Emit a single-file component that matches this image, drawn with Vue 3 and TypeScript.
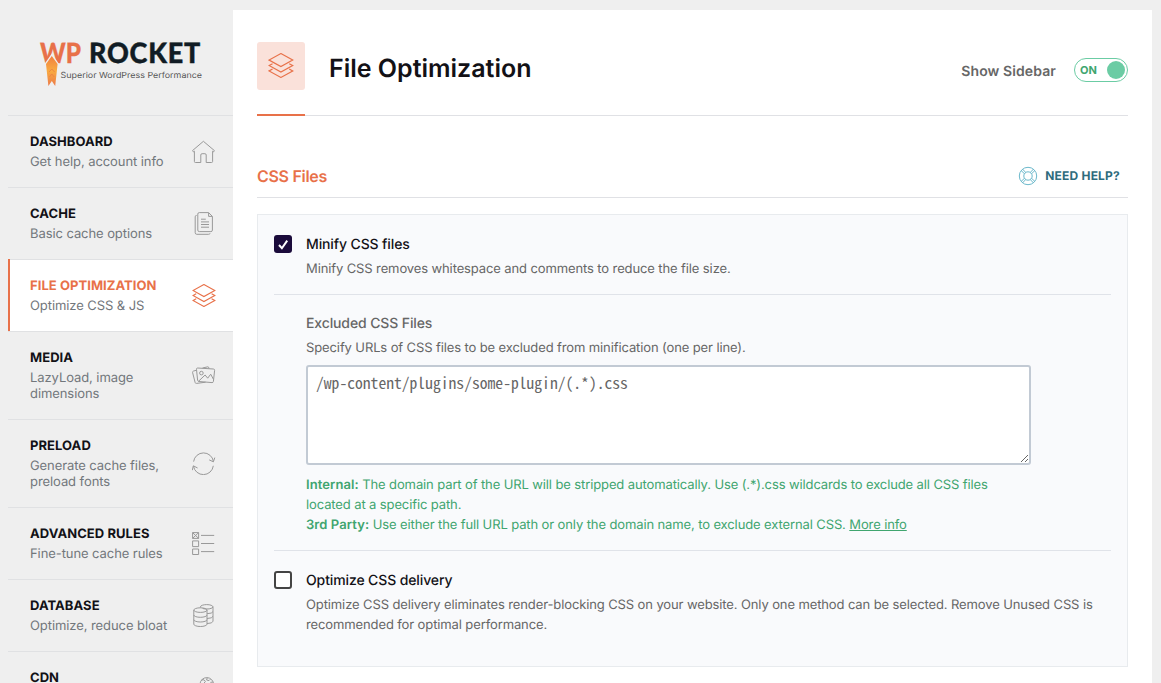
<script setup lang="ts">
import { ref } from 'vue'

interface NavItem {
  title: string
  text?: string
  icon: string
}

const layers = 'M11.9 .5L22.8 6.5L11.9 12.5L1 6.5ZM4.2 9.8L1 11.5L11.9 17.5L22.8 11.5L19.6 9.8M4.2 14.8L1 16.5L11.9 22.5L22.8 16.5L19.6 14.8'

const icons: Record<string, string> = {
  home: 'M.5 10.6L11.4 1.3L22.4 10.6L21.5 11.9L20.6 11.2V21.5Q20.6 22.5 19.6 22.5H14.2V15Q14.2 13.7 12.9 13.7H10.1Q8.8 13.7 8.8 15V22.5H3.4Q2.4 22.5 2.4 21.5V11.2L1.5 11.9Z',
  cache: 'M7.3 .6H16.6L20.4 4.4V18.1Q20.4 19.6 18.9 19.6H7.3Q5.8 19.6 5.8 18.1V2.1Q5.8 .6 7.3 .6ZM16.6 .8V4.4H20.2M4.6 3.4Q3.2 3.4 3.2 4.8V20.7Q3.2 22.3 4.8 22.3H16.6Q18 22.3 18 21.4M9 7.2H13.8M9 9.9H17M9 12.5H17M9 15.2H17',
  layers,
  media: 'M5.6 4L21.4 5Q22.7 5.1 22.6 6.4L21.4 17.5Q21.2 18.7 20 18.6L7 17.5Q5.8 17.4 5.6 16.2L4.5 5.4Q4.4 4 5.6 4ZM4.5 6.2L1.4 7.1Q.3 7.5 .6 8.6L3.1 18.4Q3.4 19.6 4.6 19.4L13.6 18.2M10.5 4L15.8 2.8Q16.8 2.6 17 4.6M11.2 9.1A1.8 1.8 0 1 1 7.6 9.1A1.8 1.8 0 1 1 11.2 9.1M6.6 17.2L13.1 11L15.7 14.2L18.7 10.2L21.4 15.2',
  preload: 'M1.6 9.6A10 10 0 0 1 21.4 9.4M17.2 7.9L21.4 9.8L22.8 5.6M21.3 13.8A10 10 0 0 1 1.5 14.2M5.6 16L1.3 13.8L.3 18.2',
  rules: 'M.6 .6H6.6V6.4H.6ZM.6 .6L6.6 6.4M6.6 .6L.6 6.4M.6 8.9H6.6V14.6H.6ZM.6 17H6.6V22.5H.6ZM9 3.4H22.2M9 11.5H22.2M9 19.6H22.2',
  database: 'M1.8 6.1A6.6 2.3 0 0 1 15 6.1A6.6 2.3 0 0 1 1.8 6.1V20.2A6.6 2.3 0 0 0 15 20.2V6.1M1.8 11A6.6 2.3 0 0 0 15 11M1.8 15.7A6.6 2.3 0 0 0 15 15.7M8.4 3.6V2.9A6.3 2.3 0 0 1 21 2.9A6.3 2.3 0 0 1 10.6 4.5M21 2.9V17.2Q21 19.3 15 19.6M21 7.6Q20.5 9.5 15 9.7M21 12.3Q20.5 14.3 15 14.5',
  cdn: 'M8 8.4A6.8 6.8 0 0 1 21.6 8.4A6.8 6.8 0 0 1 8 8.4M9.4 4L12 3.8L13.4 5.4L12 7.2L13 8.6M15.2 1.8L14.6 4L17 4.6L18.4 3.2M21 6L18.4 6.4',
}

const nav: NavItem[] = [
  { title: 'DASHBOARD', text: 'Get help, account info', icon: 'home' },
  { title: 'CACHE', text: 'Basic cache options', icon: 'cache' },
  { title: 'FILE OPTIMIZATION', text: 'Optimize CSS & JS', icon: 'layers' },
  { title: 'MEDIA', text: 'LazyLoad, image dimensions', icon: 'media' },
  { title: 'PRELOAD', text: 'Generate cache files, preload fonts', icon: 'preload' },
  { title: 'ADVANCED RULES', text: 'Fine-tune cache rules', icon: 'rules' },
  { title: 'DATABASE', text: 'Optimize, reduce bloat', icon: 'database' },
  { title: 'CDN', icon: 'cdn' },
]

const active = ref('layers')
const sidebarShown = ref(true)
const minify = ref(true)
const delivery = ref(false)
const excluded = ref('')
</script>

<template>
  <div class="page">
    <aside class="side">
      <svg class="logo" viewBox="0 0 225 115" width="225" height="115">
        <defs>
          <linearGradient id="flame" x1="0" y1="0" x2="0" y2="1">
            <stop offset="0" stop-color="#f0803f" />
            <stop offset=".5" stop-color="#f9ab42" />
            <stop offset="1" stop-color="#ec7a48" />
          </linearGradient>
        </defs>
        <text class="brand orange" x="32" y="62.6" textLength="41" lengthAdjust="spacingAndGlyphs">WP</text>
        <text class="brand" x="81" y="62.6" textLength="112" lengthAdjust="spacingAndGlyphs">ROCKET</text>
        <path d="M43.8 53.5L36.5 64L39.5 86L43.8 81L48 86L51 64Z" fill="#efefef" />
        <path d="M43.8 56L38 64L40.4 86L43.8 81L47.2 86L49.6 64Z" fill="url(#flame)" />
        <path d="M41 72L43.8 69L46.6 72M41.4 77L43.8 74L46.2 77" fill="none" stroke="#ee8644" stroke-width="1" />
        <text class="tagline" x="52.5" y="77.6" textLength="141.5" lengthAdjust="spacingAndGlyphs">Superior WordPress Performance</text>
      </svg>
      <nav>
        <a v-for="item in nav" :key="item.icon" class="item" :class="{ active: active === item.icon }" @click="active = item.icon">
          <span class="copy">
            <span class="title">{{ item.title }}</span>
            <span v-if="item.text" class="text">{{ item.text }}</span>
          </span>
          <svg class="icon" width="24" height="23" viewBox="0 0 24 23"><path :d="icons[item.icon]" /></svg>
        </a>
      </nav>
    </aside>

    <main class="panel">
      <header class="head">
        <div class="badge">
          <span class="tile"><svg width="26" height="25" viewBox="0 0 24 23"><path :d="layers" /></svg></span>
        </div>
        <h1>File Optimization</h1>
        <span class="show">Show Sidebar</span>
        <button class="toggle" :class="{ off: !sidebarShown }" @click="sidebarShown = !sidebarShown">
          <span>{{ sidebarShown ? 'ON' : 'OFF' }}</span><i></i>
        </button>
      </header>

      <div class="section">
        <h2>CSS Files</h2>
        <a class="help">
          <svg width="20" height="20" viewBox="0 0 20 20">
            <circle cx="10" cy="10" r="8.7" />
            <circle cx="10" cy="10" r="4.2" />
            <path d="M3.2 4.6L6.4 7.7M4.6 3.2L7.7 6.4M16.8 4.6L13.6 7.7M15.4 3.2L12.3 6.4M3.2 15.4L6.4 12.3M4.6 16.8L7.7 13.6M16.8 15.4L13.6 12.3M15.4 16.8L12.3 13.6" />
          </svg>
          NEED HELP?
        </a>
      </div>

      <div class="box">
        <div class="row">
          <button class="check" :class="{ on: minify }" @click="minify = !minify">
            <svg v-if="minify" width="18" height="18" viewBox="0 0 18 18"><path d="M5 10L7.9 13.2L13.2 5.6" /></svg>
          </button>
          <div class="body">
            <h3>Minify CSS files</h3>
            <p class="desc">Minify CSS removes whitespace and comments to reduce the file size.</p>
          </div>
        </div>
        <div class="row sub">
          <div class="body">
            <h3 class="muted">Excluded CSS Files</h3>
            <p class="desc">Specify URLs of CSS files to be excluded from minification (one per line).</p>
            <textarea v-model="excluded" placeholder="/wp-content/plugins/some-plugin/(.*).css"></textarea>
            <p class="note"><b>Internal:</b> The domain part of the URL will be stripped automatically. Use (.*).css wildcards to exclude all CSS files<br>located at a specific path.<br><b>3rd Party:</b> Use either the full URL path or only the domain name, to exclude external CSS. <a>More info</a></p>
          </div>
        </div>
        <div class="row last">
          <button class="check" :class="{ on: delivery }" @click="delivery = !delivery">
            <svg v-if="delivery" width="18" height="18" viewBox="0 0 18 18"><path d="M5 10L7.9 13.2L13.2 5.6" /></svg>
          </button>
          <div class="body">
            <h3>Optimize CSS delivery</h3>
            <p class="desc">Optimize CSS delivery eliminates render-blocking CSS on your website. Only one method can be selected. Remove Unused CSS is<br>recommended for optimal performance.</p>
          </div>
        </div>
      </div>
    </main>
  </div>
</template>

<style>
html,
body {
  margin: 0;
  height: 100%;
  overflow: hidden;
  background: #efefef;
}
</style>

<style scoped>
* {
  box-sizing: border-box;
}
.page {
  display: flex;
  height: 683px;
  overflow: hidden;
  padding: 0 9px 0 8px;
  background: #efefef;
  font-family: Inter, "Liberation Sans", sans-serif;
  text-rendering: geometricPrecision;
  color: #121116;
}
.side {
  width: 225px;
  flex: none;
}
.logo {
  display: block;
}
.brand {
  font: 900 28px Lato, sans-serif;
  letter-spacing: 0.8px;
  fill: #111c24;
  stroke: #111c24;
  stroke-width: 0.4;
}
.brand.orange {
  letter-spacing: 0;
  fill: #e87149;
  stroke: #e87149;
  stroke-width: 0.3;
}
.tagline {
  font: 400 8.4px Inter, sans-serif;
  fill: #555;
}
.item {
  position: relative;
  display: flex;
  align-items: center;
  justify-content: space-between;
  min-height: 72px;
  padding: 17px 17px 17px 22px;
  border-top: 1px solid #e0e1e3;
  cursor: pointer;
}
.item.active {
  background: #fff;
}
.item.active::before {
  content: "";
  position: absolute;
  left: 0;
  top: -1px;
  bottom: 0;
  width: 2px;
  background: #e87149;
}
.copy {
  align-self: flex-start;
  width: 150px;
  padding-top: 1px;
}
.title,
.text {
  display: block;
  font-size: 13px;
  line-height: 16px;
}
.title {
  font-weight: 700;
  letter-spacing: 0.06px;
}
.active .title {
  color: #e87149;
}
.text {
  margin-top: 4px;
  width: 142px;
  letter-spacing: -0.08px;
  color: #72777c;
}
.icon {
  margin-bottom: 1px;
}
.icon path {
  fill: none;
  stroke: #999;
  stroke-width: 1;
}
.active .icon path,
.tile path {
  fill: none;
  stroke: #e87149;
  stroke-width: 1.1;
}
.panel {
  flex: 1;
  margin-top: 10px;
  padding: 0 24px;
  background: #fff;
}
.head {
  display: flex;
  align-items: center;
  height: 106px;
  padding-top: 14px;
  border-bottom: 1px solid #e0e1e5;
}
.badge {
  align-self: flex-start;
  width: 48px;
  height: 92px;
  margin-bottom: -2px;
  padding-top: 18px;
  border-bottom: 2px solid #e87149;
}
.tile {
  display: flex;
  align-items: center;
  justify-content: center;
  width: 48px;
  height: 48px;
  border-radius: 3px;
  background: #fae1da;
}
.tile svg {
  margin-bottom: 1px;
}
h1 {
  flex: 1;
  margin: 0 0 1px 24px;
  font-size: 25px;
  line-height: 32px;
  font-weight: 600;
}
.show {
  margin: 4px 18px 0 0;
  font-size: 14px;
  font-weight: 600;
  letter-spacing: 0.1px;
  color: #666;
}
.toggle {
  display: flex;
  align-items: center;
  justify-content: space-between;
  width: 54px;
  height: 24px;
  padding: 0 2px 0 5px;
  border: 1px solid #6bcca4;
  border-radius: 12px;
  background: #fff;
  font: 700 11px Inter, sans-serif;
  color: #40a56f;
}
.toggle i {
  width: 18px;
  height: 18px;
  border-radius: 50%;
  background: #6bcca4;
}
.toggle.off {
  flex-direction: row-reverse;
}
.section {
  display: flex;
  align-items: center;
  justify-content: space-between;
  height: 82px;
  padding: 38px 8px 0 0;
  border-bottom: 1px solid #e0e1e5;
}
h2 {
  margin: 0;
  font-size: 16px;
  line-height: 20px;
  font-weight: 600;
  letter-spacing: -0.3px;
  color: #e87149;
}
.help {
  display: flex;
  align-items: center;
  gap: 7px;
  font-size: 12px;
  font-weight: 700;
  letter-spacing: 0.2px;
  color: #2d6b7c;
}
.help svg {
  fill: none;
  stroke: #6bb8cb;
  stroke-width: 1;
}
.box {
  height: 453px;
  margin-top: 16px;
  padding: 0 16px;
  border: 1px solid #e8ebee;
  background: #f9fafc;
}
.row {
  display: flex;
  padding: 20px 0 15px;
  border-bottom: 1px solid #e0e3e9;
}
.row.sub {
  height: 256px;
  padding: 19px 0 0 32px;
}
.row.last {
  border-bottom: 0;
}
.check {
  width: 18px;
  height: 18px;
  flex: none;
  margin: 0 14px 0 0;
  padding: 0;
  border: 2px solid #444;
  border-radius: 3px;
  background: #fff;
}
.check.on {
  border: 0;
  background: #1b0b3b;
}
.check svg {
  display: block;
  fill: none;
  stroke: #fff;
  stroke-width: 2;
}
h3 {
  margin: 0;
  font-size: 14px;
  line-height: 20px;
  font-weight: 500;
  letter-spacing: -0.12px;
}
.muted {
  color: #666;
}
p {
  margin: 0;
  font-size: 13px;
  line-height: 20px;
  letter-spacing: -0.114px;
  white-space: nowrap;
}
.desc {
  margin-top: 4px;
  color: #666;
}
textarea {
  display: block;
  width: 725px;
  height: 100px;
  margin: 7px 0 10px;
  padding: 6px 8px;
  border: 2px solid #c2cad4;
  border-radius: 3px;
  outline: none;
  background: #fff;
  font: 15.6px/18px "Noto Sans Mono CJK SC", "Noto Sans Mono CJK JP", monospace;
  resize: both;
}
textarea::placeholder {
  color: #666;
  opacity: 1;
}
.note {
  color: #40a56f;
}
.note b {
  font-weight: 600;
  letter-spacing: 0.08px;
}
.note a {
  text-decoration: underline;
}
</style>
